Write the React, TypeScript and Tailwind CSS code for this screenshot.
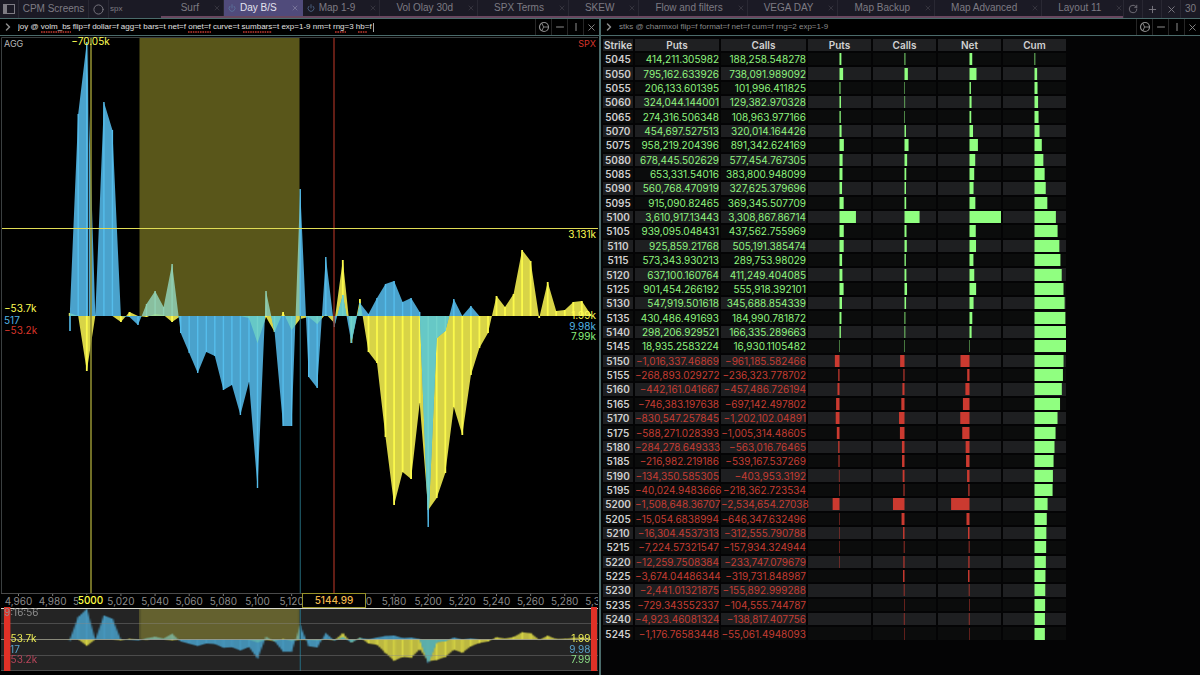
import { ChevronRight, Minus, Plus, RotateCw, X, Power, Circle } from "lucide-react";

type Tab = { name: string; active?: boolean; power?: boolean };

const tabs: Tab[] = [
  { name: "Surf" },
  { name: "Day B/S", active: true, power: true },
  { name: "Map 1-9", power: true },
  { name: "Vol Olay 30d" },
  { name: "SPX Terms" },
  { name: "SKEW" },
  { name: "Flow and filters" },
  { name: "VEGA DAY" },
  { name: "Map Backup" },
  { name: "Map Advanced" },
  { name: "Layout 11" },
];

// strike, puts, calls
const rows: [number, string, string][] = [
  [5045, "414,211.305982", "188,258.548278"],
  [5050, "795,162.633926", "738,091.989092"],
  [5055, "206,133.601395", "101,996.411825"],
  [5060, "324,044.144001", "129,382.970328"],
  [5065, "274,316.506348", "108,963.977166"],
  [5070, "454,697.527513", "320,014.164426"],
  [5075, "958,219.204396", "891,342.624169"],
  [5080, "678,445.502629", "577,454.767305"],
  [5085, "653,331.54016", "383,800.948099"],
  [5090, "560,768.470919", "327,625.379696"],
  [5095, "915,090.82465", "369,345.507709"],
  [5100, "3,610,917.13443", "3,308,867.86714"],
  [5105, "939,095.048431", "437,562.755969"],
  [5110, "925,859.21768", "505,191.385474"],
  [5115, "573,343.930213", "289,753.98029"],
  [5120, "637,100.160764", "411,249.404085"],
  [5125, "901,454.266192", "555,918.392101"],
  [5130, "547,919.501618", "345,688.854339"],
  [5135, "430,486.491693", "184,990.781872"],
  [5140, "298,206.929521", "166,335.289663"],
  [5145, "18,935.2583224", "16,930.1105482"],
  [5150, "−1,016,337.46869", "−961,185.582466"],
  [5155, "−268,893.029272", "−236,323.778702"],
  [5160, "−442,161.041667", "−457,486.726194"],
  [5165, "−746,383.197638", "−697,142.497802"],
  [5170, "−830,547.257845", "−1,202,102.04891"],
  [5175, "−588,271.028393", "−1,005,314.48605"],
  [5180, "−284,278.649333", "−563,016.76465"],
  [5185, "−216,982.219186", "−539,167.537269"],
  [5190, "−134,350.585305", "−403,953.3192"],
  [5195, "−40,024.9483666", "−218,362.723534"],
  [5200, "−1,508,648.36707", "−2,534,654.27038"],
  [5205, "−15,054.6838994", "−646,347.632496"],
  [5210, "−16,304.4537313", "−312,555.790788"],
  [5215, "−7,224.57321547", "−157,934.324944"],
  [5220, "−12,259.7508384", "−233,747.079679"],
  [5225, "−3,674.04486344", "−319,731.848987"],
  [5230, "−2,441.01321875", "−155,892.999288"],
  [5235, "−729.343552337", "−104,555.744787"],
  [5240, "−4,923.46081324", "−138,817.407756"],
  [5245, "−1,176.76583448", "−55,061.4948093"],
];

const toNumber = (s: string) => parseFloat(s.replace(/,/g, "").replace("−", "-"));

let running = 0;
const data = rows.map(([strike, puts, calls]) => {
  const p = toNumber(puts);
  const c = toNumber(calls);
  running += p + c;
  return { strike, puts, calls, p, c, net: p + c, cum: running };
});
const maxNet = Math.max(...data.map((d) => Math.abs(d.net)));
const maxCum = Math.max(...data.map((d) => d.cum));

// chart levels per 5 points of strike, starting at 4990
const BASE = 316;
const blue = [
  316, 114, 42, 315, 102, 130, 316, 317, 325, 304, 291, 307, 264, 333, 353, 373, 352, 356, 390, 385, 415, 382, 488,
  291, 332, 426, 426, 189, 377, 388, 257, 327, 295, 343, 303, 314, 298, 284, 281, 302, 298, 312, 527, 338, 331, 299,
  316, 306, 316,
];
const yellow = [
  313, 316, 371, 316, 316, 316, 322, 312, 316, 317, 314, 315, 322, 316, 316, 316, 316, 316, 316, 316, 316, 318, 343,
  317, 332, 312, 330, 319, 317, 324, 314, 323, 260, 343, 299, 352, 363, 437, 505, 472, 479, 403, 510, 498, 473, 407,
  435, 375, 348, 333, 296, 307, 294, 250, 261, 318, 282, 311, 310, 302, 301, 314,
];

const xAt = (strike: number) => 18.5 + (strike - 4960) * 1.7071;
const areaPath = (levels: number[]) => {
  const pts = levels.map((y, i) => `${xAt(4990 + i * 5).toFixed(1)},${y}`);
  return `M${xAt(4990)},${BASE}L${pts.join("L")}L${xAt(4990 + (levels.length - 1) * 5)},${BASE}Z`;
};
const barsPath = (levels: number[]) =>
  levels.map((y, i) => (y === BASE ? "" : `M${xAt(4990 + i * 5).toFixed(1)},${BASE}V${y}`)).join("");

const BLUE_AREA = areaPath(blue);
const YELLOW_AREA = areaPath(yellow);
const ticks = Array.from({ length: 18 }, (_, i) => 4960 + i * 20);

function Series() {
  return (
    <>
      <path d={YELLOW_AREA} fill="#d8d447" />
      <path d={barsPath(yellow)} stroke="#fbf94c" strokeWidth="1.8" />
      <path d={BLUE_AREA} fill="#4aa2cc" />
      <path d={barsPath(blue)} stroke="#55bdec" strokeWidth="1.4" />
      <path d="M70,316V331" stroke="#55bdec" strokeWidth="1.6" />
      <g clipPath="url(#yellow-clip)">
        <path d={BLUE_AREA} fill="#66c8c6" />
        <path d={barsPath(blue)} stroke="#72d2cb" strokeWidth="1.4" />
      </g>
      <rect x="139.5" y="-200" width="160" height="516" fill="#fff64a" fillOpacity="0.35" />
    </>
  );
}

function Chart() {
  return (
    <svg viewBox="0 36 599 639" className="block w-full font-[Inter,sans-serif]" fontSize="10">
      <defs>
        <clipPath id="yellow-clip">
          <path d={YELLOW_AREA} />
        </clipPath>
        <clipPath id="plot-clip">
          <rect x="1" y="37" width="597" height="557" />
        </clipPath>
        <clipPath id="overview-clip">
          <rect x="1" y="608" width="597" height="63" />
        </clipPath>
        <clipPath id="axis-clip">
          <rect x="1" y="594" width="597" height="14" />
        </clipPath>
      </defs>

      <g clipPath="url(#plot-clip)">
        <Series />
        <path d="M88.5,37V316" stroke="#111" strokeWidth="0.8" />
        <path d="M91,37V594" stroke="#8d8b30" strokeWidth="1.6" />
        <path d="M334,37V594" stroke="#8c2a1f" strokeWidth="1.4" />
        <path d="M300.3,316V594" stroke="#1f5866" strokeWidth="1.2" />
        <path d="M1,228.5H598" stroke="#e0dc55" />
      </g>
      <path d="M1.5,593.5V37.5H598" fill="none" stroke="#3a3f40" />
      <path d="M1,593.5H598" stroke="#4a4a4a" />

      {/* Level labels */}
      <text x="4" y="47" fill="#b9b9b9" fontSize="9">AGG</text>
      <text x="596" y="47" fill="#d8352a" fontSize="9" textAnchor="end">SPX</text>
      <text x="90.5" y="45" fill="#ffff55" textAnchor="middle">−70.05k</text>
      <text x="4" y="312" fill="#ffff55">−53.7k</text>
      <text x="4" y="324" fill="#52b4e4">517</text>
      <text x="4" y="334" fill="#d8352a">−53.2k</text>
      <text x="596" y="238" fill="#ffff55" textAnchor="end">3.131k</text>
      <text x="596" y="319" fill="#ffff55" textAnchor="end">1.99k</text>
      <text x="596" y="330" fill="#52b4e4" textAnchor="end">9.98k</text>
      <text x="596" y="340" fill="#8bf07d" textAnchor="end">7.99k</text>

      {/* Axis */}
      <g clipPath="url(#axis-clip)">
        {ticks.map((t) => (
          <g key={t}>
            <path d={`M${xAt(t)},594v2`} stroke="#777" />
            <text x={xAt(t)} y="604.5" fill="#8b8b8b" textAnchor="middle">
              {t.toLocaleString("en-US")}
            </text>
          </g>
        ))}
      </g>
      <rect x="78" y="595" width="25" height="12" fill="#000" />
      <text x="90.5" y="604" fill="#ffff45" fontWeight="500" textAnchor="middle">5000</text>
      <rect x="302.5" y="593.5" width="63" height="14" fill="#000" stroke="#96912a" />
      <text x="334" y="604" fill="#f2b84b" fontWeight="500" textAnchor="middle">5144.99</text>

      {/* Overview */}
      <rect x="1" y="608" width="597" height="63" fill="#242424" />
      <g clipPath="url(#overview-clip)">
        <g transform="translate(0 604.1) scale(1 0.112)" opacity="0.85">
          <Series />
        </g>
        <path d="M300.3,608V671" stroke="#256274" strokeWidth="1.2" />
      </g>
      <path d="M1,623.5H598M1,655.5H598M1,670.5H598" stroke="#8a8a8a" strokeOpacity="0.4" />
      <path d="M1,639.5H598" stroke="#b5b5a0" strokeOpacity="0.7" />
      <path d="M1,608.5H598" stroke="#d9d9cf" />
      <text x="4" y="642" fill="#eeee55">−53.7k</text>
      <text x="4" y="653" fill="#5aa4cc">517</text>
      <text x="4" y="663" fill="#b8455a">−53.2k</text>
      <text x="596" y="642" fill="#eeee55" textAnchor="end">1.99k</text>
      <text x="596" y="653" fill="#5aa4cc" textAnchor="end">9.98k</text>
      <text x="596" y="663" fill="#8bdc85" textAnchor="end">7.99k</text>
      <rect x="4" y="607" width="6.4" height="64" fill="#e03127" />
      <rect x="591" y="607" width="6" height="64" fill="#e03127" />
      <text x="4" y="616" fill="#8f8f8f">9:16:56</text>
    </svg>
  );
}

function WheelIcon() {
  return (
    <svg viewBox="0 0 12 12" className="size-3" fill="none" stroke="currentColor">
      <circle cx="6" cy="6" r="4.5" strokeWidth="1.2" />
      <path d="M5.6,6H10.4M5.6,6L3.8,2.2M5.6,6L3.8,9.8" strokeWidth="0.9" />
    </svg>
  );
}

function SidebarIcon() {
  return (
    <svg viewBox="0 0 12 10" className="h-[10px] w-3" fill="none" stroke="currentColor">
      <rect x="0.5" y="0.5" width="11" height="9" />
      <rect x="1" y="1" width="3" height="8" fill="currentColor" stroke="none" />
    </svg>
  );
}

function PanelHeader({ command, focused }: { command: string; focused?: boolean }) {
  return (
    <div className="h-[18px] flex items-stretch border-y border-[#4b6b6b] bg-black text-[#8c8c8c]">
      <label className="flex flex-1 min-w-0 items-center gap-1 pl-0.5">
        <ChevronRight className="size-3 flex-shrink-0" strokeWidth={3} aria-hidden="true" />
        <span className="sr-only">Command</span>
        <span className="relative flex flex-1 min-w-0 items-center">
          <input
            defaultValue={command}
            spellCheck={false}
            className={
              focused
                ? "w-full bg-transparent font-['Liberation_Sans',sans-serif] text-[8px] leading-4 text-[#e0e0e0] focus:outline-none"
                : "w-full bg-transparent font-['Liberation_Sans',sans-serif] text-[8px] leading-4 text-[#8a8a8a] focus:outline-none"
            }
          />
          {focused && (
            <svg className="absolute left-0 top-1 h-3 w-full pointer-events-none" aria-hidden="true">
              <path
                d="M23,9H53M170,9H193M225,9H254M317,9H328M340,9H349"
                stroke="#c23a30"
                strokeWidth="1.4"
                strokeDasharray="1.6 0.8"
              />
              <path d="M355.5,0V9" stroke="#aaa" />
            </svg>
          )}
        </span>
      </label>
      <button aria-label="Settings" className="w-4 flex items-center justify-center border-l border-[#262626]">
        <WheelIcon />
      </button>
      <button aria-label="Minimize" className="w-4 flex items-center justify-center border-l border-[#262626]">
        <Minus className="size-3" />
      </button>
      <button aria-label="Split" className="w-4 flex items-center justify-center border-l border-[#262626]">
        <svg viewBox="0 0 12 12" className="size-3">
          <path d="M6,2V10" stroke="currentColor" />
        </svg>
      </button>
      <button aria-label="Close panel" className="w-4 flex items-center justify-center border-l border-[#262626]">
        <X className="size-[11px]" />
      </button>
    </div>
  );
}

function TabBar() {
  return (
    <header className="h-[18px] flex items-stretch bg-[#1b1a25] font-['Liberation_Sans',sans-serif] text-[10px] leading-4 text-[#7d7b83]">
      <button aria-label="Toggle sidebar" className="w-[19px] flex-shrink-0 flex items-center justify-center border-r border-[#292833]">
        <SidebarIcon />
      </button>
      <button className="w-[70px] flex-shrink-0 whitespace-nowrap border-r border-[#292833]">CPM Screens</button>
      <button aria-label="Status" className="w-5 flex-shrink-0 flex items-center justify-center border-r border-[#292833]">
        <Circle className="size-[11px]" />
      </button>
      <input
        aria-label="Symbol"
        defaultValue="spx"
        className="w-[52px] flex-shrink-0 bg-transparent pl-px text-[8px] focus:outline-none"
      />
      <nav className="flex min-w-0 items-stretch overflow-hidden border-b-2 border-[#68475f]">
        {tabs.map((tab) => (
          <div
            key={tab.name}
            className={
              tab.active
                ? "flex flex-shrink-0 items-center bg-[#504b7b] text-[#e4e2ee] px-1"
                : "flex flex-shrink-0 min-w-[63px] items-center justify-end border-r border-[#292833] pl-1 pr-0.5"
            }
          >
            {tab.power ? <Power className="mr-1 size-2 text-[#5f7fa6]" /> : <span className="w-3" />}
            <button className="whitespace-nowrap">{tab.name}</button>
            <button aria-label={`Close ${tab.name}`} className="ml-3.5 opacity-40">
              <X className="size-2" />
            </button>
          </div>
        ))}
      </nav>
      <div className="ml-auto flex flex-shrink-0 items-stretch">
        <button aria-label="Reload" className="w-[19px] flex items-center justify-center border-l border-[#292833]">
          <RotateCw className="size-[10px]" />
        </button>
        <button aria-label="Add tab" className="w-[19px] flex items-center justify-center border-l border-[#292833]">
          <Plus className="size-[11px]" />
        </button>
        <button aria-label="Close all" className="w-[19px] flex items-center justify-center border-l border-[#292833]">
          <X className="size-[11px]" />
        </button>
        <span className="w-5 flex items-center justify-center border-l border-[#292833]">30</span>
      </div>
    </header>
  );
}

function BarCell({ value, max }: { value: number; max: number }) {
  const width = Math.abs(value) < 5000 ? 0 : Math.max((Math.abs(value) / max) * 50, 0.7);
  return (
    <td className="p-0">
      <svg className="block h-3 w-full" aria-hidden="true">
        <rect
          x={`${value < 0 ? 50 - width : 50}%`}
          width={`${width}%`}
          height="12"
          fill={value < 0 ? "#cb3a30" : "#90ff80"}
        />
      </svg>
    </td>
  );
}

function StrikeTable() {
  return (
    <table className="mt-px h-[605px] w-[467px] table-fixed border-separate border-spacing-0.5 text-[10px] leading-3">
      <colgroup>
        <col className="w-[30px]" />
        <col className="w-[84px]" />
        <col className="w-[85px]" />
        <col />
        <col />
        <col />
        <col />
      </colgroup>
      <thead>
        <tr className="bg-[#1f2022] text-[#d2d2d2]">
          {["Strike", "Puts", "Calls", "Puts", "Calls", "Net", "Cum"].map((h, i) => (
            <th key={i} scope="col" className="p-0 font-semibold">
              {h}
            </th>
          ))}
        </tr>
      </thead>
      <tbody>
        {data.map((d) => (
          <tr key={d.strike} className="odd:bg-[#0b0c0c] even:bg-[#1e1f21]">
            <th scope="row" className="p-0 font-semibold text-[#cfcfcf]">
              {d.strike}
            </th>
            <td className={d.p < 0 ? "p-0 text-right text-[#c63d33]" : "p-0 text-right text-[#8ff57f]"}>{d.puts}</td>
            <td className={d.c < 0 ? "p-0 text-right text-[#c63d33]" : "p-0 text-right text-[#8ff57f]"}>{d.calls}</td>
            <BarCell value={d.p} max={maxNet} />
            <BarCell value={d.c} max={maxNet} />
            <BarCell value={d.net} max={maxNet} />
            <BarCell value={d.cum} max={maxCum} />
          </tr>
        ))}
      </tbody>
    </table>
  );
}

export default function App() {
  return (
    <div className="min-h-screen flex flex-col bg-black font-[Inter,sans-serif]">
      <TabBar />
      <main className="flex flex-1 items-stretch">
        <section className="flex-1 min-w-0 border-r border-[#4b6b6b]">
          <PanelHeader
            focused
            command="joy @ volm_bs flip=f dollar=f agg=t bars=t net=f onet=f curve=t sumbars=t exp=1-9 nm=t rng=3 hb=f"
          />
          <Chart />
        </section>
        <section className="flex-1 min-w-0 border-l border-[#4b6b6b] bg-[#040405]">
          <PanelHeader command="stks @ charmxoi flip=f format=f net=f cum=f rng=2 exp=1-9" />
          <StrikeTable />
        </section>
      </main>
    </div>
  );
}
